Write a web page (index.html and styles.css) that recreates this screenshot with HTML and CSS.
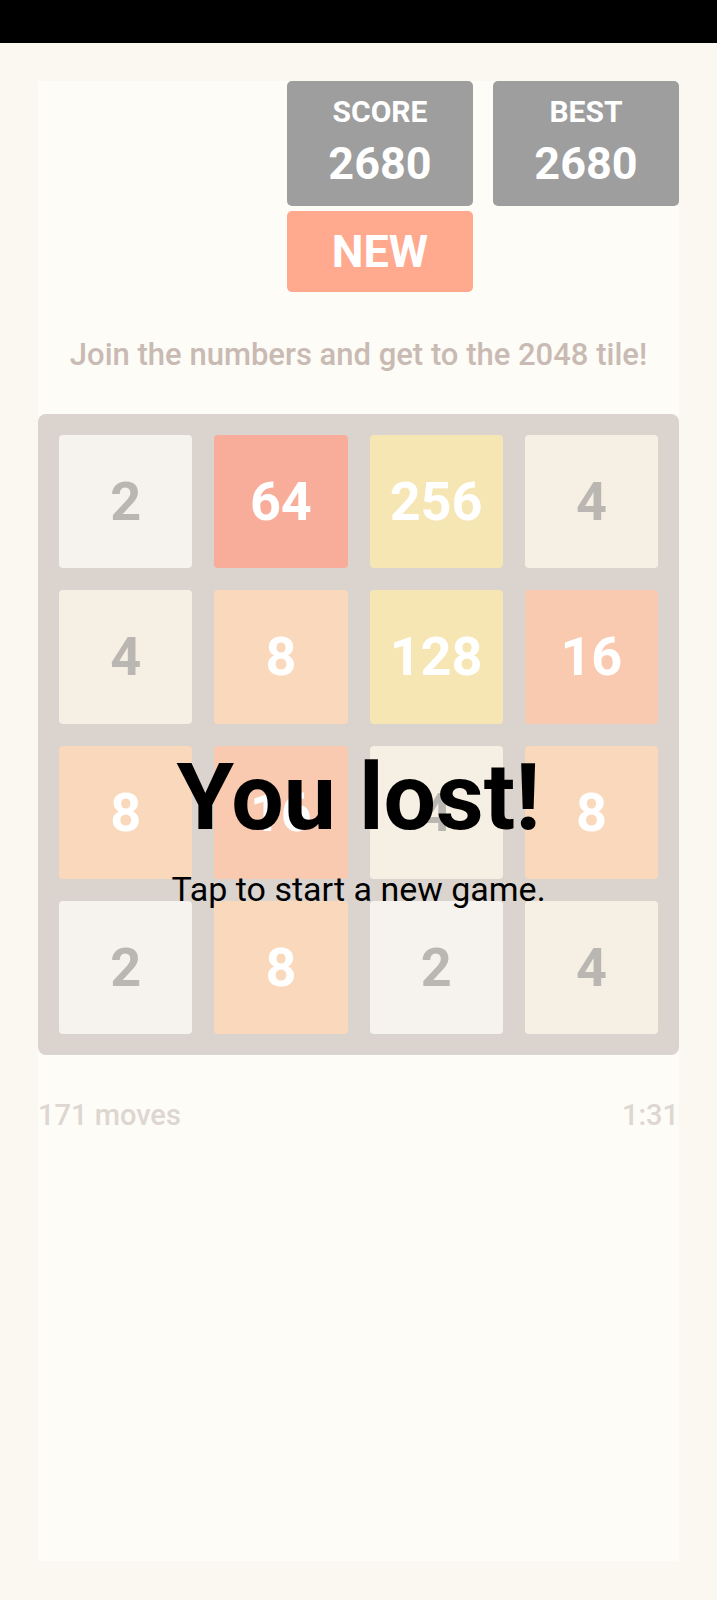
FILE: index.html
```html
<!DOCTYPE html>
<html lang="en">
<head>
<meta charset="utf-8">
<title>2048</title>
<link rel="stylesheet" href="styles.css">
</head>
<body>
<div class="statusbar"></div>
<main class="screen">
  <section class="panel">
    <header class="header">
      <div class="scores">
        <div class="scorebox">
          <div class="label">SCORE</div>
          <div class="value">2680</div>
        </div>
        <div class="scorebox">
          <div class="label">BEST</div>
          <div class="value">2680</div>
        </div>
        <button class="newbtn">NEW</button>
      </div>
    </header>
    <p class="subtitle">Join the numbers and get to the 2048 tile!</p>
    <div class="board">
      <div class="grid">
        <div class="tile t2">2</div>
        <div class="tile t64">64</div>
        <div class="tile t256">256</div>
        <div class="tile t4">4</div>
        <div class="tile t4">4</div>
        <div class="tile t8">8</div>
        <div class="tile t128">128</div>
        <div class="tile t16">16</div>
        <div class="tile t8">8</div>
        <div class="tile t16">16</div>
        <div class="tile t4">4</div>
        <div class="tile t8">8</div>
        <div class="tile t2">2</div>
        <div class="tile t8">8</div>
        <div class="tile t2">2</div>
        <div class="tile t4">4</div>
      </div>
      <div class="overlay">
        <div class="lost">You lost!</div>
        <div class="tap">Tap to start a new game.</div>
      </div>
    </div>
    <div class="stats">
      <span>171 moves</span>
      <span>1:31</span>
    </div>
  </section>
</main>
</body>
</html>
```
FILE: styles.css
```css
* { box-sizing: border-box; }
html, body {
  margin: 0;
  padding: 0;
  background: #faf8f0;
  font-family: Roboto, "Noto Sans", "Liberation Sans", sans-serif;
}
.statusbar {
  height: 43px;
  background: #000;
}
.screen {
  padding: 38px 38px 0 38px;
}
.panel {
  background: #fdfcf7;
  height: 1480px;
  display: flex;
  flex-direction: column;
}
.header {
  display: flex;
  justify-content: flex-end;
}
.scores {
  display: grid;
  grid-template-columns: 186px 186px;
  column-gap: 20px;
  row-gap: 5px;
}
.scorebox {
  background: #9e9e9e;
  border-radius: 5px;
  height: 125px;
  padding-top: 13px;
  color: #fff;
  text-align: center;
  font-weight: 700;
}
.label {
  font-size: 30px;
  line-height: 35px;
}
.value {
  font-size: 45px;
  line-height: 60px;
  margin-top: 5px;
}
.newbtn {
  grid-column: 1;
  height: 81px;
  border: 0;
  border-radius: 5px;
  background: #ffa98f;
  color: #fff;
  font-family: inherit;
  font-weight: 700;
  font-size: 45px;
  line-height: 81px;
  padding: 0;
}
.subtitle {
  margin: 42px 0 38px;
  text-align: center;
  font-size: 31px;
  line-height: 42px;
  font-weight: 500;
  color: #c9bab4;
}
.board {
  position: relative;
  width: 641px;
  height: 641px;
  background: #dbd3ce;
  border-radius: 8px;
  padding: 21px;
}
.grid {
  display: grid;
  grid-template-columns: repeat(4, 1fr);
  grid-template-rows: repeat(4, 1fr);
  gap: 22px;
  height: 100%;
}
.tile {
  border-radius: 4px;
  display: flex;
  align-items: center;
  justify-content: center;
  font-size: 54px;
  font-weight: 700;
  color: #fff;
}
.t2 { background: #f6f2ee; color: #bab6b1; }
.t4 { background: #f6efe4; color: #bab6b1; }
.t8 { background: #f9d8bb; }
.t16 { background: #f9cab0; }
.t64 { background: #f8ad9a; }
.t128 { background: #f5e6b3; }
.t256 { background: #f5e6b3; }
.overlay {
  position: absolute;
  inset: 0;
  display: flex;
  flex-direction: column;
  align-items: center;
  padding-top: 329px;
  color: #000;
}
.lost {
  font-size: 93px;
  font-weight: 700;
  line-height: 109px;
}
.tap {
  margin-top: 17px;
  font-size: 34px;
  line-height: 40px;
  font-weight: 400;
}
.stats {
  margin-top: 43px;
  display: flex;
  justify-content: space-between;
  font-size: 29px;
  line-height: 34px;
  font-weight: 500;
  color: #ddd6d1;
}
```
